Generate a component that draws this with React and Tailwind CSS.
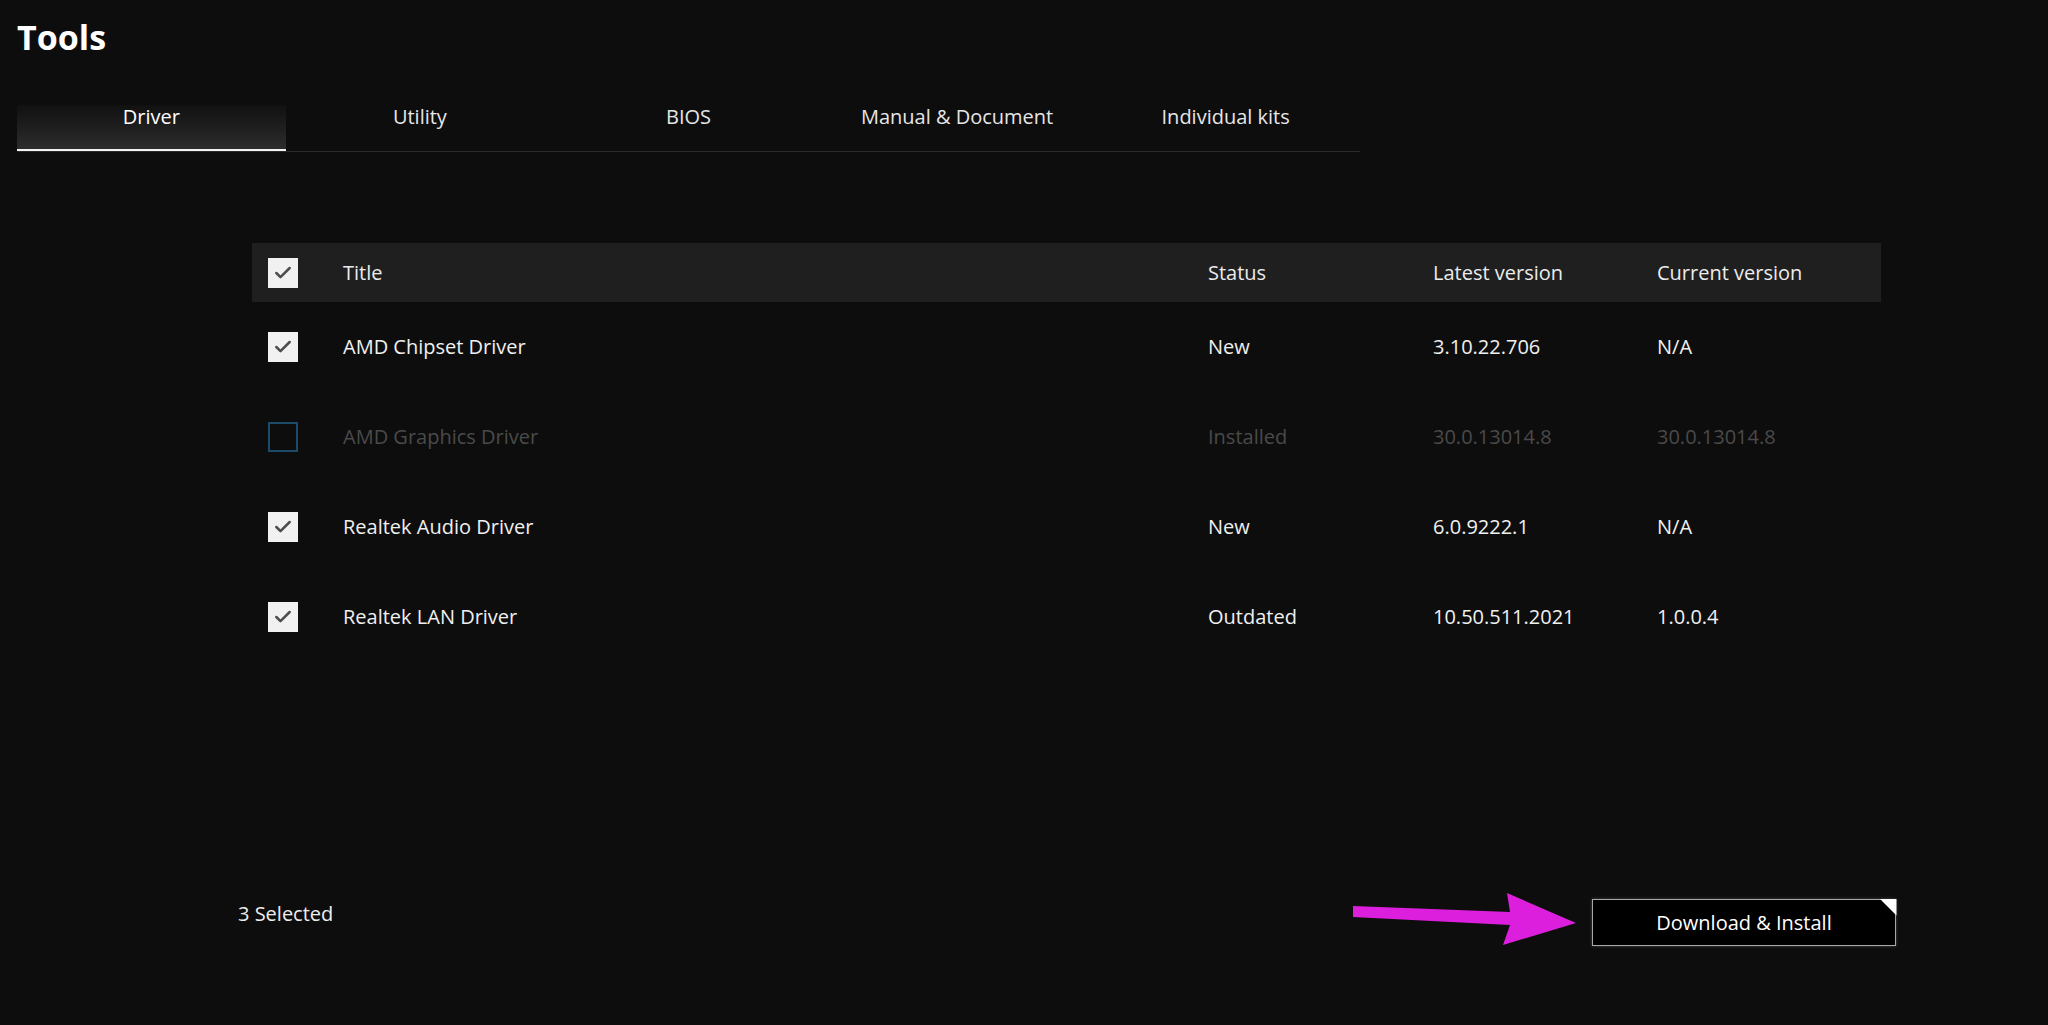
import { Check } from "lucide-react"

const tabs = ["Driver", "Utility", "BIOS", "Manual & Document", "Individual kits"]

const drivers = [
  { title: "AMD Chipset Driver", status: "New", latest: "3.10.22.706", current: "N/A", checked: true },
  { title: "AMD Graphics Driver", status: "Installed", latest: "30.0.13014.8", current: "30.0.13014.8", checked: false, disabled: true },
  { title: "Realtek Audio Driver", status: "New", latest: "6.0.9222.1", current: "N/A", checked: true },
  { title: "Realtek LAN Driver", status: "Outdated", latest: "10.50.511.2021", current: "1.0.0.4", checked: true },
]

function Checkbox({ checked, disabled }) {
  if (disabled) {
    return <div className="w-[30px] h-[30px] border-2 border-[#1b4b68] bg-transparent" />
  }
  return (
    <div className="w-[30px] h-[30px] bg-[#f1f1f1] flex items-center justify-center">
      {checked && <Check className="w-[20px] h-[20px] text-[#4d4d4d]" strokeWidth={3} />}
    </div>
  )
}

export default function App() {
  return (
    <div
      className="relative w-[2048px] h-[1025px] overflow-hidden bg-[#0d0d0d] text-[#f0f0f0]"
      style={{ fontFamily: '"Open Sans", "Noto Sans", sans-serif' }}
    >
      {/* Title */}
      <h1 className="pl-[17px] pt-[17px] text-[34px] leading-[40px] font-bold text-white">Tools</h1>

      {/* Tabs */}
      <div className="ml-[17px] mt-[48px] w-[1343px] flex border-b border-[#2a2a2a]">
        {tabs.map((tab, i) => (
          <div
            key={tab}
            className={
              i === 0
                ? "w-[268.6px] h-[46px] -mb-px border-b-2 border-[#f2f2f2] bg-gradient-to-b from-[#111111] to-[#2d2d2d] text-center text-[20px] leading-[24px] text-white"
                : "w-[268.6px] h-[46px] text-center text-[20px] leading-[24px] text-[#e6e6e6]"
            }
          >
            {tab}
          </div>
        ))}
      </div>

      {/* Table */}
      <div className="ml-[252px] mt-[91px] w-[1629px]">
        <div className="grid grid-cols-[91px_865px_225px_224px_1fr] items-center h-[59px] bg-[#1f1f1f] text-[20px] text-[#ececec]">
          <div className="pl-[16px]">
            <Checkbox checked />
          </div>
          <div>Title</div>
          <div>Status</div>
          <div>Latest version</div>
          <div>Current version</div>
        </div>

        {drivers.map((d) => (
          <div
            key={d.title}
            className={
              d.disabled
                ? "grid grid-cols-[91px_865px_225px_224px_1fr] items-center h-[90px] text-[20px] text-[#4a4a4a]"
                : "grid grid-cols-[91px_865px_225px_224px_1fr] items-center h-[90px] text-[20px] text-[#f0f0f0]"
            }
          >
            <div className="pl-[16px]">
              <Checkbox checked={d.checked} disabled={d.disabled} />
            </div>
            <div>{d.title}</div>
            <div>{d.status}</div>
            <div>{d.latest}</div>
            <div>{d.current}</div>
          </div>
        ))}
      </div>

      {/* Footer */}
      <div className="ml-[238px] mt-[237px] w-[1658px] flex items-start justify-between">
        <div className="mt-[1px] text-[20px] leading-[28px] text-[#eeeeee]">3 Selected</div>
        <button className="relative w-[304px] h-[47px] bg-black border-[1.5px] border-[#a8a8a8] shadow-[0_0_3px_rgba(255,255,255,0.25)] text-[20px] text-white">
          Download &amp; Install
          <span className="absolute -top-[1.5px] -right-[1.5px] w-[17px] h-[17px] bg-white [clip-path:polygon(0_0,100%_0,100%_100%)]" />
        </button>
      </div>

      {/* Annotation arrow */}
      <svg className="absolute left-[1350px] top-[888px]" width="230" height="60" viewBox="0 0 230 60">
        <polygon points="3,18 160,24 157,5 226,35 153,57 160,37 3,29" fill="#dc1fdc" />
      </svg>
    </div>
  )
}
